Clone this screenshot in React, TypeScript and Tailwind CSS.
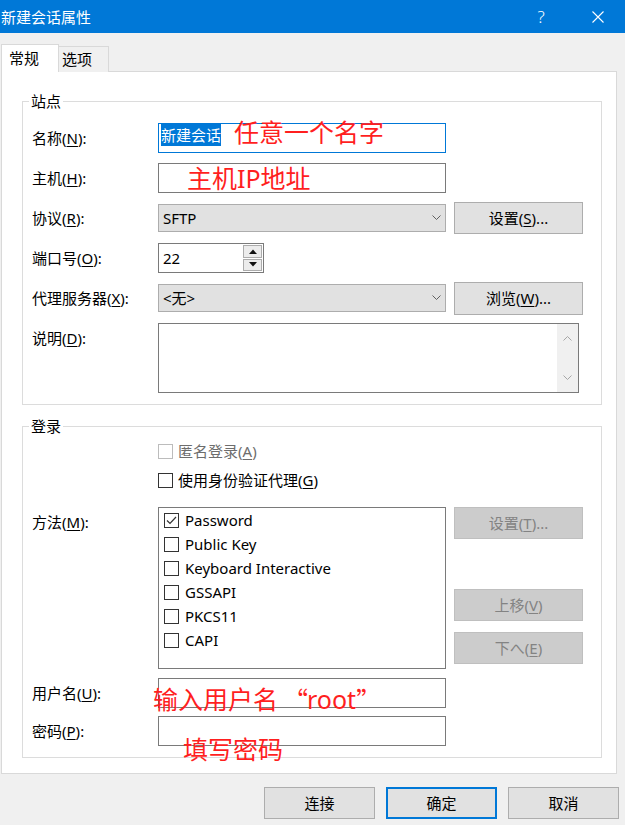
import type { ReactNode } from 'react'
import { clsx } from 'clsx'

function Mn({ text, k, colon = true }: { text: string; k: string; colon?: boolean }) {
  return (
    <span>
      {text}(<u className="underline-offset-2">{k}</u>){colon ? ':' : ''}
    </span>
  )
}

function Chevron({ color = '#5f5f5f', up = false }: { color?: string; up?: boolean }) {
  return (
    <svg width="9" height="6" viewBox="0 0 9 6" className="shrink-0">
      <path d={up ? 'M0.5 5.5 L4.5 1.5 L8.5 5.5' : 'M0.5 0.5 L4.5 4.5 L8.5 0.5'} fill="none" stroke={color} strokeWidth="1" />
    </svg>
  )
}

function Box({ checked, disabled }: { checked?: boolean; disabled?: boolean }) {
  return (
    <span
      className={clsx(
        'w-[15px] h-[15px] border bg-white flex items-center justify-center shrink-0',
        disabled ? 'border-[#bcbcbc]' : 'border-[#333333]'
      )}
    >
      {checked && (
        <svg width="13" height="13" viewBox="0 0 13 13">
          <path d="M2 6.5 L5 9.5 L11 3" fill="none" stroke="#333" strokeWidth="1.2" />
        </svg>
      )}
    </span>
  )
}

function Btn({ children, disabled, className }: { children: ReactNode; disabled?: boolean; className?: string }) {
  return (
    <div
      className={clsx(
        'w-[129px] h-[32px] border flex items-center justify-center shrink-0',
        disabled ? 'bg-[#cccccc] border-[#bfbfbf] text-[#838383]' : 'bg-[#e1e1e1] border-[#adadad]',
        className
      )}
    >
      {children}
    </div>
  )
}

function Select({ value }: { value: string }) {
  return (
    <div className="w-[288px] h-[28px] bg-[#e1e1e1] border border-[#adadad] flex items-center justify-between pl-[4px] pr-[4px]">
      <span>{value}</span>
      <Chevron />
    </div>
  )
}

function Input({ children, focused }: { children?: ReactNode; focused?: boolean }) {
  return (
    <div
      className={clsx(
        'w-[288px] h-[30px] border bg-white flex items-start pl-[2px]',
        focused ? 'border-[#0078d7]' : 'border-[#7a7a7a]'
      )}
    >
      {children}
    </div>
  )
}

function Row({ label, children, className, top }: { label?: ReactNode; children: ReactNode; className?: string; top?: boolean }) {
  return (
    <div className={clsx('flex', top ? 'items-start' : 'items-center', className)}>
      <div className={clsx('w-[126px] shrink-0 leading-[20px]', top && 'pt-[5px]')}>{label}</div>
      {children}
    </div>
  )
}

function Group({ title, children, className }: { title: string; children: ReactNode; className?: string }) {
  return (
    <div className={clsx('ml-[20px] w-[580px] relative border border-[#dcdcdc] flex flex-col pl-[9px]', className)}>
      <span className="absolute left-[6px] -top-[11px] bg-white px-[2px] leading-[20px]">{title}</span>
      {children}
    </div>
  )
}

function Tri({ up }: { up?: boolean }) {
  return (
    <svg width="8" height="5" viewBox="0 0 8 5">
      <path d={up ? 'M0 5 L4 0.5 L8 5 Z' : 'M0 0 L4 4.5 L8 0 Z'} fill="#111" />
    </svg>
  )
}

const methods = ['Password', 'Public Key', 'Keyboard Interactive', 'GSSAPI', 'PKCS11', 'CAPI']

export default function App() {
  return (
    <div className="w-[625px] h-[825px] bg-[#f0f0f0] relative overflow-hidden text-[15px] text-black font-['Noto_Sans','Noto_Sans_CJK_SC',sans-serif]">
      <div className="h-[33px] bg-[#0078d7] flex items-center text-white">
        <span className="pl-[1px] flex-1 leading-[20px]">新建会话属性</span>
        <div className="w-[46px] flex justify-center text-[17px] font-light">?</div>
        <div className="w-[46px] ml-[11px] mr-[4px] flex justify-center">
          <svg width="12" height="12" viewBox="0 0 12 12">
            <path d="M0.5 0.5 L11.5 11.5 M11.5 0.5 L0.5 11.5" stroke="#fff" strokeWidth="1.1" />
          </svg>
        </div>
      </div>

      <div className="mt-[11px] ml-[1px] flex items-end h-[28px]">
        <div className="relative z-10 h-[28px] w-[58px] bg-white border-l border-t border-r border-[#d9d9d9] flex items-center pl-[7px] pb-[1px]">
          常规
        </div>
        <div className="h-[26px] w-[50px] bg-[#f0f0f0] border-t border-r border-[#d9d9d9] flex items-center pl-[3px] pb-[1px]">
          选项
        </div>
      </div>

      <div className="-mt-px ml-[1px] w-[616px] h-[703px] bg-white border border-[#d9d9d9] flex flex-col">
        <Group title="站点" className="mt-[29px] pt-[21px] pb-[11px]">
          <Row label={<Mn text="名称" k="N" />}>
            <Input focused>
              <span className="bg-[#0078d7] text-white leading-[22px]">新建会话</span>
            </Input>
          </Row>
          <Row label={<Mn text="主机" k="H" />} className="mt-[10px]">
            <Input />
          </Row>
          <Row label={<Mn text="协议" k="R" />} className="mt-[9px] h-[32px]">
            <Select value="SFTP" />
            <Btn className="ml-[8px]">
              <Mn text="设置" k="S" colon={false} />...
            </Btn>
          </Row>
          <Row label={<Mn text="端口号" k="O" />} className="mt-[9px]">
            <div className="w-[106px] h-[30px] border border-[#7a7a7a] flex">
              <div className="flex-1 pl-[4px] flex items-center">22</div>
              <div className="w-[21px] flex flex-col p-[1px] gap-[1px]">
                <div className="flex-1 bg-[#ececec] border border-[#acacac] flex items-center justify-center">
                  <Tri up />
                </div>
                <div className="flex-1 bg-[#ececec] border border-[#acacac] flex items-center justify-center">
                  <Tri />
                </div>
              </div>
            </div>
          </Row>
          <Row label={<Mn text="代理服务器" k="X" />} className="mt-[9px] h-[32px]">
            <Select value="<无>" />
            <Btn className="ml-[8px] h-[33px]">
              <Mn text="浏览" k="W" colon={false} />...
            </Btn>
          </Row>
          <Row label={<Mn text="说明" k="D" />} className="mt-[9px]" top>
            <div className="w-[421px] h-[70px] border border-[#7a7a7a] flex justify-end">
              <div className="w-[21px] bg-[#f0f0f0] flex flex-col items-center justify-between py-[11px]">
                <Chevron up color="#a6a6a6" />
                <Chevron color="#a6a6a6" />
              </div>
            </div>
          </Row>
        </Group>

        <Group title="登录" className="mt-[21px] pt-[14px] pb-[11px]">
          <Row className="h-[20px]">
            <div className="flex items-center gap-[5px] text-[#6d6d6d]">
              <Box disabled />
              <Mn text="匿名登录" k="A" colon={false} />
            </div>
          </Row>
          <Row className="h-[20px] mt-[9px]">
            <div className="flex items-center gap-[5px]">
              <Box />
              <Mn text="使用身份验证代理" k="G" colon={false} />
            </div>
          </Row>
          <Row label={<Mn text="方法" k="M" />} className="mt-[17px]" top>
            <div className="w-[288px] h-[162px] border border-[#7a7a7a] flex flex-col">
              {methods.map((m, i) => (
                <div key={m} className="h-[24px] flex items-center pl-[5px] gap-[6px] leading-[20px]">
                  <Box checked={i === 0} />
                  <span>{m}</span>
                </div>
              ))}
            </div>
            <div className="ml-[8px] flex flex-col">
              <Btn disabled>
                <Mn text="设置" k="T" colon={false} />...
              </Btn>
              <Btn disabled className="mt-[50px]">
                <Mn text="上移" k="V" colon={false} />
              </Btn>
              <Btn disabled className="mt-[11px]">
                <Mn text="下へ" k="E" colon={false} />
              </Btn>
            </div>
          </Row>
          <Row label={<Mn text="用户名" k="U" />} className="mt-[9px]">
            <Input />
          </Row>
          <Row label={<Mn text="密码" k="P" />} className="mt-[8px]">
            <Input />
          </Row>
        </Group>
      </div>

      <div className="mt-[13px] flex justify-end gap-[11px] pr-[6px]">
        <div className="w-[111px] h-[32px] bg-[#e1e1e1] border border-[#adadad] flex items-center justify-center">连接</div>
        <div className="w-[111px] h-[32px] bg-[#e1e1e1] border-2 border-[#0078d7] flex items-center justify-center">确定</div>
        <div className="w-[111px] h-[32px] bg-[#e1e1e1] border border-[#adadad] flex items-center justify-center">取消</div>
      </div>

      <span className="absolute left-[234px] top-[120px] text-[25px] leading-[25px] text-[#ff1f1f]">任意一个名字</span>
      <span className="absolute left-[187px] top-[166px] text-[25px] leading-[25px] text-[#ff1f1f]">主机IP地址</span>
      <span className="absolute left-[153px] top-[687px] text-[25px] leading-[25px] text-[#ff1f1f] flex">
        <span>输入用户名</span>
        <span className="font-['Noto_Sans_CJK_SC',sans-serif] w-[25px] pl-[5px]">“</span>
        <span className="ml-[4px]">root</span>
        <span className="font-['Noto_Sans_CJK_SC',sans-serif]">”</span>
      </span>
      <span className="absolute left-[183px] top-[737px] text-[25px] leading-[25px] text-[#ff1f1f]">填写密码</span>
    </div>
  )
}
